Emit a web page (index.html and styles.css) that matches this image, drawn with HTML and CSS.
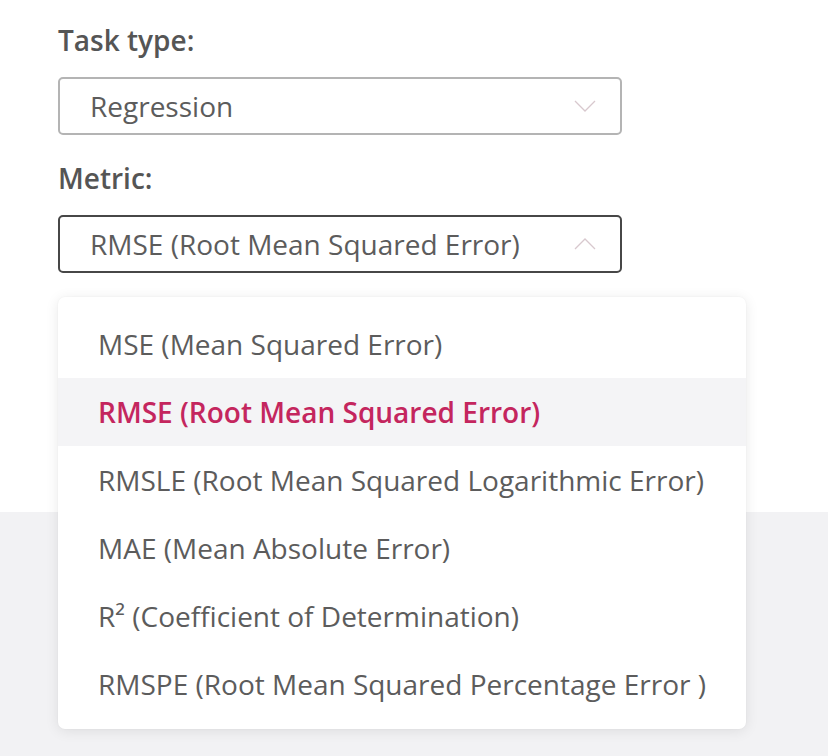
FILE: index.html
```html
<!DOCTYPE html>
<html lang="en">
<head>
<meta charset="utf-8">
<title>Metric select</title>
<link rel="stylesheet" href="styles.css">
</head>
<body>
<div class="page">
  <section class="panel">
    <div class="field">
      <label class="label">Task type:</label>
      <div class="select">
        <span class="value">Regression</span>
        <svg class="chev" width="22" height="12" viewBox="0 0 22 12"><path d="M1 1 L11 11 L21 1" fill="none" stroke="#d8c8ce" stroke-width="1.3"/></svg>
      </div>
    </div>
    <div class="field">
      <label class="label">Metric:</label>
      <div class="select-wrap">
        <div class="select open">
          <span class="value">RMSE (Root Mean Squared Error)</span>
          <svg class="chev" width="22" height="12" viewBox="0 0 22 12"><path d="M1 11 L11 1 L21 11" fill="none" stroke="#d8c8ce" stroke-width="1.3"/></svg>
        </div>
        <ul class="menu">
          <li class="item">MSE (Mean Squared Error)</li>
          <li class="item active">RMSE (Root Mean Squared Error)</li>
          <li class="item">RMSLE (Root Mean Squared Logarithmic Error)</li>
          <li class="item">MAE (Mean Absolute Error)</li>
          <li class="item">R² (Coefficient of Determination)</li>
          <li class="item">RMSPE (Root Mean Squared Percentage Error )</li>
        </ul>
      </div>
    </div>
  </section>
  <section class="below"></section>
</div>
</body>
</html>
```

FILE: styles.css
```css
* { box-sizing: border-box; }
html, body { margin: 0; padding: 0; }
body {
  font-family: "Open Sans", "Liberation Sans", sans-serif;
  color: #5a5a5a;
  background: #f2f2f4;
}
.page { width: 828px; height: 756px; overflow: hidden; }
.panel {
  background: #ffffff;
  height: 512px;
  padding: 22px 0 0 58px;
  display: flex;
  flex-direction: column;
  gap: 25px;
}
.field { display: flex; flex-direction: column; gap: 19px; }
.label {
  font-size: 28px;
  font-weight: 600;
  color: #555555;
  line-height: 36px;
}
.select-wrap { position: relative; width: 564px; }
.select {
  width: 564px;
  height: 58px;
  flex: none;
  border: 2px solid #b4b4b4;
  border-radius: 5px;
  display: flex;
  align-items: center;
  justify-content: space-between;
  padding: 0 24px 0 30px;
  background: #fff;
}
.select.open { border-color: #474747; }
.value { font-size: 28px; color: #5c5c5c; line-height: 36px; }
.chev { display: block; }
.menu {
  position: absolute;
  top: 82px;
  left: 0;
  width: 688px;
  margin: 0;
  padding: 13px 0 11px;
  list-style: none;
  background: #fff;
  border-radius: 7px;
  box-shadow: 0 2px 14px rgba(0,0,0,0.09), 0 0 2px rgba(0,0,0,0.05);
  z-index: 2;
}
.item {
  height: 68px;
  display: flex;
  align-items: center;
  padding-left: 40px;
  font-size: 28px;
  color: #5c5c5c;
  white-space: nowrap;
}
.item.active {
  background: #f4f4f6;
  color: #c4265e;
  font-weight: 600;
}
.below { flex: 1; }
```
